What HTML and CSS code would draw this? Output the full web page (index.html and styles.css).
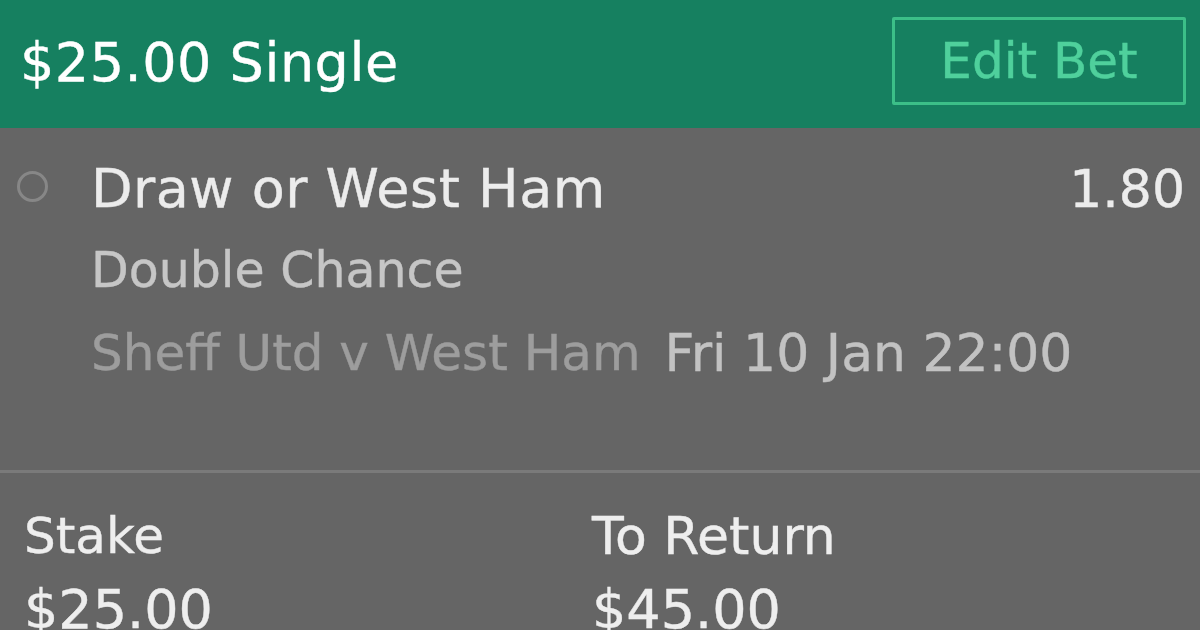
FILE: index.html
```html
<!DOCTYPE html>
<html lang="en">
<head>
    <meta charset="UTF-8">
    <title>Bet Receipt</title>
    <link rel="stylesheet" href="styles.css">
</head>
<body>
    <div class="slip">
        <div class="slip-header">
            <h1 class="slip-title">$25.00 Single</h1>
            <button class="edit-btn">Edit Bet</button>
        </div>

        <div class="selection">
            <div class="radio"></div>
            <div class="selection-info">
                <div class="selection-top">
                    <span class="selection-name">Draw or West Ham</span>
                    <span class="odds">1.80</span>
                </div>
                <div class="market">Double Chance</div>
                <div class="event">
                    <span class="fixture">Sheff Utd v West Ham</span>
                    <span class="kickoff">Fri 10 Jan 22:00</span>
                </div>
            </div>
        </div>

        <div class="totals">
            <div class="total">
                <div class="total-label">Stake</div>
                <div class="total-value">$25.00</div>
            </div>
            <div class="total">
                <div class="total-label return-label">To Return</div>
                <div class="total-value">$45.00</div>
            </div>
        </div>
    </div>
</body>
</html>
```

FILE: styles.css
```css
body {
    margin: 0;
    font-family: 'DejaVu Sans', 'Verdana', sans-serif;
    background-color: #656565;
    overflow: hidden;
    -webkit-text-stroke: 0.4px currentColor;
}

.slip {
    width: 1200px;
    height: 630px;
}

.slip-header {
    display: flex;
    align-items: center;
    justify-content: space-between;
    height: 128px;
    padding: 0 14px 0 20px;
    background-color: #168060;
    box-sizing: border-box;
}

.slip-title {
    margin: 0 0 4px;
    color: #ffffff;
    font-size: 54px;
    font-weight: normal;
    letter-spacing: 0.5px;
}

.edit-btn {
    width: 294px;
    height: 88px;
    margin-bottom: 7px;
    background: transparent;
    border: 3px solid #3cbf88;
    border-radius: 2px;
    color: #4fd09c;
    font-family: inherit;
    font-size: 50px;
    cursor: pointer;
}

.selection {
    display: flex;
    gap: 43px;
    padding: 20px 15px 0 17px;
    height: 345px;
    box-sizing: border-box;
    border-bottom: 3px solid #7a7a7a;
}

.radio {
    flex: none;
    width: 25px;
    height: 25px;
    margin-top: 23px;
    border: 3px solid #878787;
    border-radius: 50%;
}

.selection-info {
    flex: 1;
    line-height: 82px;
}

.selection-top {
    display: flex;
    justify-content: space-between;
    color: #ececec;
    font-size: 54px;
    letter-spacing: 0.5px;
}

.odds {
    letter-spacing: 0;
    font-size: 52px;
}

.market {
    color: #c6c6c6;
    font-size: 49px;
}

.event {
    display: flex;
    gap: 24px;
}

.fixture {
    color: #9d9d9d;
    font-size: 50px;
}

.kickoff {
    color: #c2c2c2;
    font-size: 52px;
}

.totals {
    display: grid;
    grid-template-columns: 568px 1fr;
    padding: 26px 0 0 24px;
    line-height: 74px;
}

.total-label {
    color: #eeeeee;
    font-size: 50px;
}

.return-label {
    font-size: 52px;
}

.total-value {
    color: #eeeeee;
    font-size: 54px;
}
```
